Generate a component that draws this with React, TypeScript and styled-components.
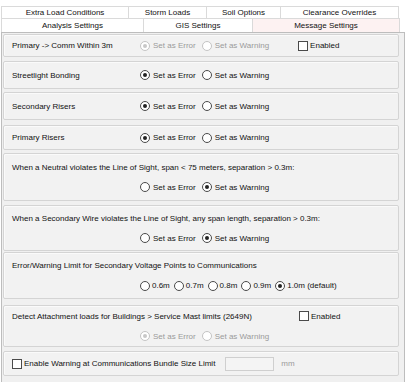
import React from "react";
import styled, { createGlobalStyle } from "styled-components";

const GlobalStyle = createGlobalStyle`
  body {
    margin: 0;
    background: #ffffff;
    font-family: "Liberation Sans", Arial, sans-serif;
    font-size: 8px;
    color: #111;
  }
`;

const Page = styled.div`
  width: 406px;
  height: 382px;
  overflow: hidden;
  padding-top: 6px;
  box-sizing: border-box;
`;

const TabRow = styled.div<{ $h: number }>`
  display: flex;
  height: ${(p) => p.$h}px;
  margin: 0 5px 0 2px;
`;

const Tab = styled.div<{ $w: number; $active?: boolean }>`
  width: ${(p) => p.$w}px;
  box-sizing: border-box;
  border: 1px solid #dadada;
  border-bottom: none;
  margin-left: -1px;
  background: ${(p) => (p.$active ? "#fdf2f2" : "#ffffff")};
  display: flex;
  align-items: center;
  justify-content: center;
  color: #111;
`;

const Panel = styled.div`
  border: 1px solid #bdbdbd;
  margin: 0 1px 0 1px;
  background: #f0f0f0;
  height: 360px;
  box-sizing: border-box;
  padding: 1px 5px 0 1px;
  display: flex;
  flex-direction: column;
`;

const Group = styled.div<{ $h: number; $gap: number }>`
  height: ${(p) => p.$h}px;
  margin-top: ${(p) => p.$gap}px;
  box-sizing: border-box;
  border: 1px solid #d4d4d4;
  border-radius: 2px;
  box-shadow: inset 1px 1px 0 #fafafa;
  background: #f2f2f2;
  display: flex;
  flex-direction: column;
  justify-content: center;
  padding: 0 8px;
`;

const Line = styled.div`
  display: flex;
  align-items: center;
  height: 20px;
`;

const Label = styled.span<{ $w?: number }>`
  width: ${(p) => (p.$w ? `${p.$w}px` : "auto")};
  flex: none;
  white-space: nowrap;
`;

const Options = styled.div<{ $pad?: number; $gap?: number }>`
  display: flex;
  align-items: center;
  gap: ${(p) => p.$gap ?? 7}px;
  padding-left: ${(p) => p.$pad || 0}px;
`;

const Opt = styled.span<{ $off?: boolean; $tight?: boolean }>`
  display: inline-flex;
  align-items: center;
  gap: ${(p) => (p.$tight ? 2 : 3)}px;
  white-space: nowrap;
  color: ${(p) => (p.$off ? "#9a9a9a" : "#111")};
`;

const Circle = styled.span<{ $on?: boolean; $off?: boolean }>`
  width: 10px;
  height: 10px;
  box-sizing: border-box;
  border-radius: 50%;
  border: 1px solid ${(p) => (p.$off ? "#c4c4c4" : "#4a4a4a")};
  background: #fff;
  display: inline-flex;
  align-items: center;
  justify-content: center;
  &::after {
    content: "";
    width: 4px;
    height: 4px;
    border-radius: 50%;
    background: ${(p) => (p.$off ? "#c8c8c8" : "#222")};
    display: ${(p) => (p.$on ? "block" : "none")};
  }
`;

const Box = styled.span`
  width: 10px;
  height: 10px;
  box-sizing: border-box;
  border: 1px solid #4a4a4a;
  background: #fff;
  display: inline-block;
`;

const Check = styled.span<{ $left?: number }>`
  display: inline-flex;
  align-items: center;
  gap: 2px;
  margin-left: ${(p) => p.$left || 0}px;
  white-space: nowrap;
`;

const Field = styled.span<{ $left: number }>`
  width: 49px;
  height: 14px;
  box-sizing: border-box;
  border: 1px solid #cfcfcf;
  background: #f4f4f4;
  margin-left: ${(p) => p.$left}px;
`;

const Unit = styled.span`
  color: #9a9a9a;
  margin-left: 7px;
`;

const Radio = ({
  label,
  on,
  off,
  tight,
}: {
  label: string;
  on?: boolean;
  off?: boolean;
  tight?: boolean;
}) => (
  <Opt $off={off} $tight={tight}>
    <Circle $on={on} $off={off} />
    {label}
  </Opt>
);

const ErrWarn = ({ warn, off }: { warn?: boolean; off?: boolean }) => (
  <Options $gap={6}>
    <Radio label="Set as Error" on={!warn} off={off} />
    <Radio label="Set as Warning" on={warn} off={off} />
  </Options>
);

const App = () => {
  return (
    <Page>
      <GlobalStyle />
      <TabRow $h={12}>
        <Tab $w={128}>Extra Load Conditions</Tab>
        <Tab $w={79}>Storm Loads</Tab>
        <Tab $w={75}>Soil Options</Tab>
        <Tab $w={119}>Clearance Overrides</Tab>
      </TabRow>
      <TabRow $h={14}>
        <Tab $w={143}>Analysis Settings</Tab>
        <Tab $w={110}>GIS Settings</Tab>
        <Tab $w={148} $active>
          Message Settings
        </Tab>
      </TabRow>
      <Panel>
        <Group $h={23} $gap={0}>
          <Line>
            <Label $w={128}>Primary -&gt; Comm Within 3m</Label>
            <ErrWarn off />
            <Check $left={29}>
              <Box />
              Enabled
            </Check>
          </Line>
        </Group>
        <Group $h={28} $gap={4}>
          <Line>
            <Label $w={128}>Streetlight Bonding</Label>
            <ErrWarn />
          </Line>
        </Group>
        <Group $h={28} $gap={3}>
          <Line>
            <Label $w={128}>Secondary Risers</Label>
            <ErrWarn />
          </Line>
        </Group>
        <Group $h={25} $gap={5}>
          <Line>
            <Label $w={128}>Primary Risers</Label>
            <ErrWarn />
          </Line>
        </Group>
        <Group $h={48} $gap={3}>
          <Line>
            <Label>When a Neutral violates the Line of Sight, span &lt; 75 meters, separation &gt; 0.3m:</Label>
          </Line>
          <Line>
            <Options $pad={128}>
              <ErrWarn warn />
            </Options>
          </Line>
        </Group>
        <Group $h={46} $gap={4}>
          <Line>
            <Label>When a Secondary Wire violates the Line of Sight, any span length, separation &gt; 0.3m:</Label>
          </Line>
          <Line>
            <Options $pad={128}>
              <ErrWarn warn />
            </Options>
          </Line>
        </Group>
        <Group $h={47} $gap={1}>
          <Line>
            <Label>Error/Warning Limit for Secondary Voltage Points to Communications</Label>
          </Line>
          <Line>
            <Options $pad={128} $gap={4}>
              <Radio label="0.6m" tight />
              <Radio label="0.7m" tight />
              <Radio label="0.8m" tight />
              <Radio label="0.9m" tight />
              <Radio label="1.0m (default)" tight on />
            </Options>
          </Line>
        </Group>
        <Group $h={42} $gap={6}>
          <Line>
            <Label $w={287}>Detect Attachment loads for Buildings &gt; Service Mast limits (2649N)</Label>
            <Check>
              <Box />
              Enabled
            </Check>
          </Line>
          <Line>
            <Options $pad={128}>
              <ErrWarn off />
            </Options>
          </Line>
        </Group>
        <Group $h={25} $gap={4}>
          <Line>
            <Check>
              <Box />
              Enable Warning at Communications Bundle Size Limit
            </Check>
            <Field $left={10} />
            <Unit>mm</Unit>
          </Line>
        </Group>
      </Panel>
    </Page>
  );
};

export default App;
